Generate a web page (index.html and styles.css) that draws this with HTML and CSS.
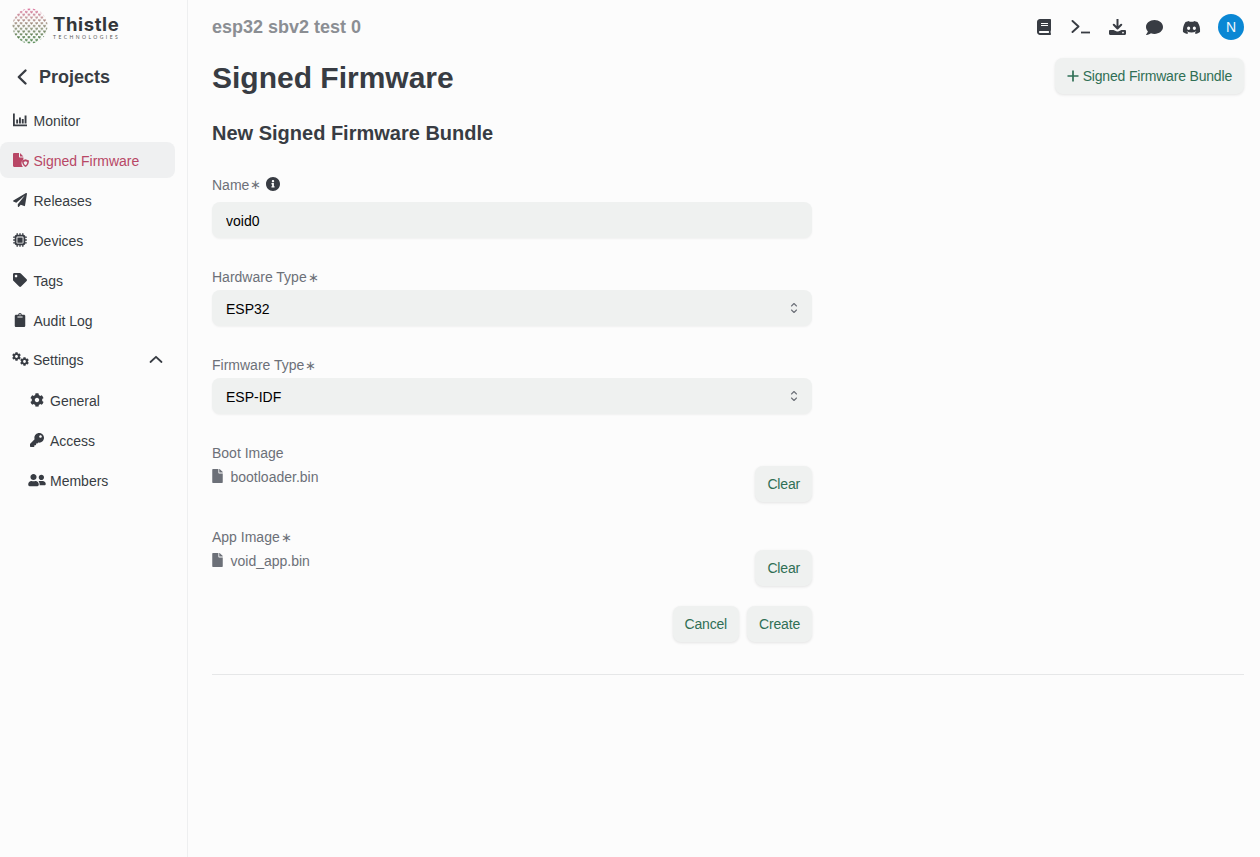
FILE: index.html
```html
<!DOCTYPE html>
<html lang="en">
<head>
  <meta charset="UTF-8">
  <meta name="viewport" content="width=device-width, initial-scale=1.0">
  <title>Signed Firmware</title>
  <link rel="stylesheet" href="styles.css">
</head>
<body>
  <svg class="defs" width="0" height="0">
    <symbol id="i-cog" viewBox="0 0 512 512"><path d="M487.4 315.7l-42.6-24.6c4.3-23.2 4.3-47 0-70.2l42.6-24.6c4.9-2.8 7.1-8.6 5.5-14-11.1-35.6-30-67.8-54.7-94.6-3.8-4.1-10-5.1-14.8-2.3L380.8 110c-17.9-15.4-38.5-27.3-60.8-35.1V25.8c0-5.6-3.9-10.5-9.4-11.7-36.7-8.2-74.3-7.8-109.2 0-5.5 1.2-9.4 6.1-9.4 11.7V75c-22.2 7.9-42.8 19.8-60.8 35.1L88.7 85.5c-4.9-2.8-11-1.9-14.8 2.3-24.7 26.7-43.6 58.9-54.7 94.6-1.7 5.4.6 11.2 5.5 14L67.3 221c-4.3 23.2-4.3 47 0 70.2l-42.6 24.6c-4.9 2.8-7.1 8.6-5.5 14 11.1 35.6 30 67.8 54.7 94.6 3.8 4.1 10 5.1 14.8 2.3l42.6-24.6c17.9 15.4 38.5 27.3 60.8 35.1v49.2c0 5.6 3.9 10.5 9.4 11.7 36.7 8.2 74.3 7.8 109.2 0 5.5-1.2 9.4-6.1 9.4-11.7v-49.2c22.2-7.9 42.8-19.8 60.8-35.1l42.6 24.6c4.9 2.8 11 1.9 14.8-2.3 24.7-26.7 43.6-58.9 54.7-94.6 1.5-5.5-.7-11.3-5.6-14.1zM256 336c-44.1 0-80-35.9-80-80s35.9-80 80-80 80 35.9 80 80-35.9 80-80 80z"/></symbol>
    <symbol id="i-file" viewBox="0 0 384 512"><path d="M224 136V0H24C10.7 0 0 10.7 0 24v464c0 13.3 10.7 24 24 24h336c13.3 0 24-10.7 24-24V160H248c-13.2 0-24-10.8-24-24zm160-14.1v6.1H256V0h6.1c6.4 0 12.5 2.5 17 7l97.9 98c4.5 4.5 7 10.6 7 16.9z"/></symbol>
    <symbol id="i-updown" viewBox="0 0 10 14"><path d="M2.500 5L5 2.500 7.500 5M2.500 9L5 11.500 7.500 9" fill="none" stroke="currentColor" stroke-width="1.100" stroke-linecap="round" stroke-linejoin="round"/></symbol>
  </svg>

  <div class="layout">
    <aside class="sidebar">
      <div class="logo">
        <svg class="logo-mark" viewBox="0 0 36 36" width="36" height="36">
          <defs>
            <linearGradient id="logoGrad" x1="0" y1="0" x2="0" y2="1">
              <stop offset="0" stop-color="#d9588c"/>
              <stop offset="0.28" stop-color="#b98a8a"/>
              <stop offset="0.55" stop-color="#7c8164"/>
              <stop offset="1" stop-color="#2f7430"/>
            </linearGradient>
            <pattern id="logoDots" width="5.200" height="5.600" patternUnits="userSpaceOnUse">
              <path d="M.2 .4l1.100 1.200 1.100-1.200M2.800 3.200l1.100 1.200 1.100-1.200" fill="none" stroke="#fff" stroke-width="1.300"/>
            </pattern>
            <mask id="logoMask"><circle cx="18" cy="18" r="17.500" fill="url(#logoDots)"/></mask>
          </defs>
          <rect width="36" height="36" fill="url(#logoGrad)" mask="url(#logoMask)"/>
        </svg>
        <div class="logo-text">
          <span class="logo-name">Thistle</span>
          <span class="logo-sub">TECHNOLOGIES</span>
        </div>
      </div>

      <a class="back" href="#">
        <svg width="12" height="18" viewBox="0 0 12 18"><path d="M9.500 2.500L2.800 9l6.700 6.500" fill="none" stroke="currentColor" stroke-width="2.400" stroke-linecap="round" stroke-linejoin="round"/></svg>
        Projects
      </a>

      <nav class="nav">
        <a class="nav-item" href="#">
          <svg class="nav-icon" width="14" height="14" viewBox="0 0 14 14"><path d="M.9 .5v11.800H14" fill="none" stroke="currentColor" stroke-width="1.800"/><path d="M3.200 6.500h1.900V10.500H3.200zM6 4.500h1.900V10.500H6zM8.800 6h1.900V10.500H8.800zM11.600 2.500h1.900V10.500h-1.900z" fill="currentColor"/></svg>
          Monitor
        </a>
        <a class="nav-item active" href="#">
          <svg class="nav-icon" width="16" height="14" viewBox="0 0 16 14"><path d="M0 1.200C0 .5.5 0 1.200 0H6v3.500c0 .6.4 1 1 1h3.400v2A4 4 0 0 0 8.500 10c0 1.500.5 3 1.500 4H1.200C.5 14 0 13.500 0 12.800zM7 0l3.400 3.500H7z" fill="currentColor"/><path d="M12.500 6.300l3.500 1.300c0 3.200-1.300 5.300-3.500 6.400-2.200-1.100-3.500-3.200-3.500-6.400z" fill="currentColor"/><path d="M12.500 8.300l1.800.7c-.1 1.600-.7 2.600-1.800 3.300-1.100-.7-1.700-1.700-1.800-3.300z" fill="#eff0f1"/></svg>
          Signed Firmware
        </a>
        <a class="nav-item" href="#">
          <svg class="nav-icon" width="14" height="14" viewBox="0 0 512 512"><path d="M476 3.200L12.500 270.600c-18.100 10.400-15.800 35.600 2.200 43.200L121 358.400l287.300-253.200c5.500-4.900 13.300 2.600 8.600 8.300L176 407v80.500c0 23.600 28.500 32.900 42.500 15.800L282 426l124.600 52.200c14.200 6 30.400-2.900 33-18.200l72-432C515 7.800 493.300-6.800 476 3.200z"/></svg>
          Releases
        </a>
        <a class="nav-item" href="#">
          <svg class="nav-icon" width="14" height="14" viewBox="0 0 512 512"><path d="M176 24c0-13.300-10.700-24-24-24s-24 10.700-24 24V64c-35.300 0-64 28.700-64 64H24c-13.300 0-24 10.700-24 24s10.700 24 24 24H64v56H24c-13.300 0-24 10.700-24 24s10.700 24 24 24H64v56H24c-13.300 0-24 10.700-24 24s10.700 24 24 24H64c0 35.300 28.700 64 64 64v40c0 13.300 10.700 24 24 24s24-10.700 24-24V448h56v40c0 13.300 10.700 24 24 24s24-10.700 24-24V448h56v40c0 13.300 10.700 24 24 24s24-10.700 24-24V448c35.300 0 64-28.700 64-64h40c13.300 0 24-10.700 24-24s-10.700-24-24-24H448V280h40c13.300 0 24-10.700 24-24s-10.700-24-24-24H448V176h40c13.300 0 24-10.700 24-24s-10.700-24-24-24H448c0-35.300-28.700-64-64-64V24c0-13.300-10.700-24-24-24s-24 10.700-24 24V64H280V24c0-13.300-10.700-24-24-24s-24 10.700-24 24V64H176V24zM160 128H352c17.700 0 32 14.300 32 32V352c0 17.700-14.300 32-32 32H160c-17.700 0-32-14.300-32-32V160c0-17.700 14.300-32 32-32zm192 32H160V352H352V160z"/></svg>
          Devices
        </a>
        <a class="nav-item" href="#">
          <svg class="nav-icon" width="14" height="14" viewBox="0 0 512 512"><path d="M0 252.118V48C0 21.490 21.490 0 48 0h204.118a48 48 0 0 1 33.941 14.059l211.882 211.882c18.745 18.745 18.745 49.137 0 67.882L293.823 497.941c-18.745 18.745-49.137 18.745-67.882 0L14.059 286.059A48 48 0 0 1 0 252.118zM112 64c-26.510 0-48 21.490-48 48s21.490 48 48 48 48-21.490 48-48-21.490-48-48-48z"/></svg>
          Tags
        </a>
        <a class="nav-item" href="#">
          <svg class="nav-icon" width="14" height="14" viewBox="0 0 384 512"><path d="M384 112v352c0 26.510-21.490 48-48 48H48c-26.510 0-48-21.490-48-48V112c0-26.510 21.490-48 48-48h80c0-35.290 28.710-64 64-64s64 28.710 64 64h80c26.510 0 48 21.490 48 48zM192 40c-13.255 0-24 10.745-24 24s10.745 24 24 24 24-10.745 24-24-10.745-24-24-24m96 114v-20a6 6 0 0 0-6-6H102a6 6 0 0 0-6 6v20a6 6 0 0 0 6 6h180a6 6 0 0 0 6-6z"/></svg>
          Audit Log
        </a>
        <a class="nav-item settings" href="#">
          <svg class="nav-icon cogs" width="17" height="14" viewBox="0 0 17 14"><use href="#i-cog" x="0" y="0" width="9" height="9"/><use href="#i-cog" x="8" y="5" width="9" height="9"/></svg>
          Settings
          <svg class="caret" width="14" height="9" viewBox="0 0 14 9"><path d="M1.500 7L7 1.800 12.500 7" fill="none" stroke="currentColor" stroke-width="1.800" stroke-linecap="round" stroke-linejoin="round"/></svg>
        </a>
        <a class="nav-item sub" href="#">
          <svg class="nav-icon" width="14" height="14"><use href="#i-cog"/></svg>
          General
        </a>
        <a class="nav-item sub" href="#">
          <svg class="nav-icon" width="14" height="14" viewBox="0 0 512 512"><path d="M512 176.001C512 273.203 433.202 352 336 352c-11.220 0-22.190-1.062-32.827-3.069l-24.012 27.014A23.999 23.999 0 0 1 261.223 384H224v40c0 13.255-10.745 24-24 24h-40v40c0 13.255-10.745 24-24 24H24c-13.255 0-24-10.745-24-24v-78.059c0-6.365 2.529-12.470 7.029-16.971l161.802-161.802C163.108 213.814 160 195.271 160 176 160 78.798 238.797.001 335.999 0 433.488-.001 512 78.511 512 176.001zM336 128c0 26.510 21.490 48 48 48s48-21.490 48-48-21.490-48-48-48-48 21.490-48 48z"/></svg>
          Access
        </a>
        <a class="nav-item sub members" href="#">
          <svg class="nav-icon" width="18" height="14" viewBox="0 0 640 512"><path d="M192 256c61.900 0 112-50.100 112-112S253.900 32 192 32 80 82.100 80 144s50.100 112 112 112zm76.800 32h-8.300c-20.800 10-43.900 16-68.500 16s-47.600-6-68.500-16h-8.300C51.600 288 0 339.600 0 403.200V432c0 26.500 21.500 48 48 48h288c26.500 0 48-21.500 48-48v-28.800c0-63.600-51.600-115.200-115.200-115.200zM480 256c53 0 96-43 96-96s-43-96-96-96-96 43-96 96 43 96 96 96zm48 32h-3.800c-13.900 4.800-28.600 8-44.200 8s-30.300-3.200-44.200-8H432c-20.400 0-39.200 5.900-55.700 15.400 24.400 26.300 39.700 61.200 39.700 99.800v38.400c0 2.200-.5 4.300-.6 6.400H592c26.500 0 48-21.500 48-48 0-61.900-50.100-112-112-112z"/></svg>
          Members
        </a>
      </nav>
    </aside>

    <main class="main">
      <header class="topbar">
        <div class="project-name">esp32 sbv2 test 0</div>
        <div class="top-icons">
          <svg width="14" height="16" viewBox="0 0 448 512"><path d="M448 360V24c0-13.300-10.700-24-24-24H96C43 0 0 43 0 96v320c0 53 43 96 96 96h328c13.300 0 24-10.700 24-24v-16c0-7.500-3.500-14.300-8.900-18.700-4.200-15.400-4.200-59.300 0-74.700 5.400-4.300 8.900-11.100 8.900-18.600zM128 134c0-3.300 2.700-6 6-6h212c3.300 0 6 2.700 6 6v20c0 3.300-2.700 6-6 6H134c-3.300 0-6-2.700-6-6v-20zm0 64c0-3.300 2.700-6 6-6h212c3.300 0 6 2.700 6 6v20c0 3.300-2.700 6-6 6H134c-3.300 0-6-2.700-6-6v-20zm253.400 250H96c-17.700 0-32-14.300-32-32 0-17.600 14.400-32 32-32h285.400c-1.900 17.100-1.900 46.900 0 64z"/></svg>
          <svg class="nudge" width="19" height="14" viewBox="0 0 19 14"><path d="M1.500 1l6 5.500-6 5.500" fill="none" stroke="currentColor" stroke-width="1.900" stroke-linecap="round" stroke-linejoin="round"/><path d="M10 12.500h9" fill="none" stroke="currentColor" stroke-width="1.800"/></svg>
          <svg width="17" height="16" viewBox="0 0 17 16"><path d="M8.500 0v9M4.800 5.800l3.700 3.700 3.700-3.700" fill="none" stroke="currentColor" stroke-width="2" stroke-linecap="round" stroke-linejoin="round"/><path d="M1.200 11H4.500l2.800 1.300c.7.400 1.700.4 2.400 0L12.500 11h3.300c.7 0 1.200.5 1.200 1.200v2.600c0 .7-.5 1.200-1.200 1.200H1.200C.5 16 0 15.500 0 14.800v-2.600C0 11.500.5 11 1.200 11z"/><circle cx="14" cy="13.600" r=".9" fill="#fcfcfc"/></svg>
          <svg class="nudge" width="17" height="15" viewBox="0 32 512 448"><path d="M256 32C114.600 32 0 125.100 0 240c0 49.600 21.400 95 57 130.700C44.500 421.100 2.700 466 2.200 466.500c-2.200 2.300-2.800 5.700-1.500 8.700S4.800 480 8 480c66.300 0 116-31.800 140.600-51.400 32.700 12.300 69 19.400 107.400 19.400 141.400 0 256-93.100 256-208S397.400 32 256 32z"/></svg>
          <svg width="19" height="15" viewBox="0 0 640 512"><path d="M524.531,69.836a1.500,1.500,0,0,0-.764-.7A485.065,485.065,0,0,0,404.081,32.030a1.816,1.816,0,0,0-1.923.910,337.461,337.461,0,0,0-14.900,30.600,447.848,447.848,0,0,0-134.426,0,309.541,309.541,0,0,0-15.135-30.600,1.890,1.890,0,0,0-1.924-.910A483.689,483.689,0,0,0,116.085,69.137a1.712,1.712,0,0,0-.788.676C39.068,183.651,18.186,294.690,28.430,404.354a2.016,2.016,0,0,0,.765,1.375A487.666,487.666,0,0,0,176.020,479.918a1.900,1.900,0,0,0,2.063-.676A348.200,348.200,0,0,0,208.120,430.400a1.860,1.860,0,0,0-1.019-2.588,321.173,321.173,0,0,1-45.868-21.853,1.885,1.885,0,0,1-.185-3.126c3.082-2.309,6.166-4.711,9.109-7.137a1.819,1.819,0,0,1,1.900-.256c96.229,43.917,200.410,43.917,295.500,0a1.812,1.812,0,0,1,1.924.233c2.944,2.426,6.027,4.851,9.132,7.160a1.884,1.884,0,0,1-.162,3.126,301.407,301.407,0,0,1-45.890,21.830,1.875,1.875,0,0,0-1,2.611,391.055,391.055,0,0,0,30.014,48.815,1.864,1.864,0,0,0,2.063.7A486.048,486.048,0,0,0,610.700,405.729a1.882,1.882,0,0,0,.765-1.352C623.729,277.594,590.933,167.465,524.531,69.836ZM222.491,337.580c-28.972,0-52.844-26.587-52.844-59.239S193.056,219.100,222.491,219.100c29.665,0,53.306,26.820,52.843,59.239C275.334,310.993,251.924,337.580,222.491,337.580Zm195.380,0c-28.971,0-52.843-26.587-52.843-59.239S388.437,219.100,417.871,219.100c29.667,0,53.307,26.820,52.844,59.239C470.715,310.993,447.538,337.580,417.871,337.580Z"/></svg>
          <div class="avatar">N</div>
        </div>
      </header>

      <div class="page-head">
        <h1>Signed Firmware</h1>
        <button class="btn btn-add" type="button">
          <svg width="12" height="12" viewBox="0 0 12 12"><path d="M6 .5v11M.5 6h11" fill="none" stroke="currentColor" stroke-width="1.700"/></svg>
          Signed Firmware Bundle
        </button>
      </div>

      <form class="bundle-form">
        <h2>New Signed Firmware Bundle</h2>

        <div class="field field-name">
          <label for="name">Name<span class="req">∗</span>
            <svg class="info" width="14" height="14" viewBox="8 8 496 496"><path d="M256 8C119 8 8 119.100 8 256c0 137 111 248 248 248s248-111 248-248C504 119.100 393 8 256 8zm0 110c23.200 0 42 18.800 42 42s-18.800 42-42 42-42-18.800-42-42 18.800-42 42-42zm56 254c0 6.600-5.400 12-12 12h-88c-6.600 0-12-5.400-12-12v-24c0-6.600 5.400-12 12-12h12v-64h-12c-6.600 0-12-5.400-12-12v-24c0-6.600 5.400-12 12-12h64c6.600 0 12 5.400 12 12v100h12c6.600 0 12 5.400 12 12v24z"/></svg>
          </label>
          <input id="name" class="control" type="text" value="void0">
        </div>

        <div class="field">
          <label for="hw">Hardware Type<span class="req">∗</span></label>
          <div class="select-wrap">
            <select id="hw" class="control"><option>ESP32</option></select>
            <svg class="updown" width="10" height="14"><use href="#i-updown"/></svg>
          </div>
        </div>

        <div class="field">
          <label for="fw">Firmware Type<span class="req">∗</span></label>
          <div class="select-wrap">
            <select id="fw" class="control"><option>ESP-IDF</option></select>
            <svg class="updown" width="10" height="14"><use href="#i-updown"/></svg>
          </div>
        </div>

        <div class="file-field">
          <div>
            <div class="file-label">Boot Image</div>
            <div class="file-name"><svg width="11" height="14"><use href="#i-file"/></svg>bootloader.bin</div>
          </div>
          <button class="btn" type="button">Clear</button>
        </div>

        <div class="file-field">
          <div>
            <div class="file-label">App Image<span class="req">∗</span></div>
            <div class="file-name"><svg width="11" height="14"><use href="#i-file"/></svg>void_app.bin</div>
          </div>
          <button class="btn" type="button">Clear</button>
        </div>

        <div class="actions">
          <button class="btn" type="button">Cancel</button>
          <button class="btn" type="submit">Create</button>
        </div>
      </form>

      <hr class="divider">
    </main>
  </div>
</body>
</html>
```

FILE: styles.css
```css
* {
  box-sizing: border-box;
}
html, body {
  height: 100%;
}
body {
  margin: 0;
  font-family: "Liberation Sans", Arial, sans-serif;
  font-size: 14px;
  line-height: 20px;
  color: #383c43;
  background: #fcfcfc;
  overflow: hidden;
}
a {
  color: inherit;
  text-decoration: none;
}
svg {
  fill: currentColor;
  flex: none;
}
.defs {
  position: absolute;
}
.layout {
  display: flex;
  height: 100%;
}

/* sidebar */
.sidebar {
  width: 188px;
  flex: none;
  border-right: 1px solid #eeeff0;
}
.logo {
  height: 52px;
  padding: 8px 0 0 12px;
  display: flex;
  gap: 5px;
}
.logo-text {
  display: flex;
  flex-direction: column;
  padding-top: 6px;
}
.logo-name {
  font-family: Inter, sans-serif;
  font-weight: 700;
  font-size: 18.500px;
  line-height: 20px;
  letter-spacing: 0.6px;
  color: #33363a;
}
.logo-sub {
  font-family: Lato, sans-serif;
  font-size: 5px;
  line-height: 7px;
  letter-spacing: 2.450px;
  color: #555;
}
.back {
  display: flex;
  align-items: center;
  gap: 11px;
  height: 32px;
  margin: 9px 0 0 16px;
  font-size: 18px;
  font-weight: 700;
}
.nav {
  display: flex;
  flex-direction: column;
  gap: 4px;
  width: 175px;
  margin-top: 9px;
}
.nav-item {
  display: flex;
  align-items: center;
  gap: 6.500px;
  height: 36px;
  padding: 2px 0 0 13px;
  border-radius: 8px;
}
.nav-item .nav-icon {
  margin-top: -2px;
}
.nav-item.active {
  color: #b84766;
  background: #eff0f1;
  gap: 4.500px;
}
.nav-item.settings {
  position: relative;
  gap: 4px;
  padding-left: 12px;
  margin-top: -1px;
  margin-bottom: 1px;
}
.caret {
  position: absolute;
  right: 12px;
  top: 14px;
}
.nav-item.sub {
  padding-left: 30px;
  gap: 6px;
}
.nav-item.members {
  padding-left: 28px;
  gap: 4px;
}

/* main */
.main {
  flex: 1;
  min-width: 0;
  padding: 0 16px 0 24px;
}
.topbar {
  display: flex;
  align-items: center;
  justify-content: space-between;
  height: 54px;
}
.project-name {
  font-size: 18px;
  font-weight: 700;
  color: #8b8e93;
}
.top-icons {
  display: flex;
  align-items: center;
  gap: 19px;
}
.top-icons .nudge {
  margin-left: 1px;
}
.avatar {
  width: 26px;
  height: 26px;
  margin-left: -2px;
  border-radius: 50%;
  background: #0a87d4;
  color: #f4f8fb;
  font-size: 14px;
  line-height: 26px;
  text-align: center;
}
.page-head {
  display: flex;
  justify-content: space-between;
  align-items: flex-start;
  height: 60px;
  padding-top: 4px;
}
h1 {
  margin: 0;
  font-size: 30px;
  line-height: 40px;
  font-weight: 700;
}
h2 {
  margin: 0 0 28px;
  font-size: 20px;
  line-height: 28px;
  font-weight: 700;
}
.bundle-form {
  width: 600px;
  padding-top: 5px;
}
.btn {
  display: inline-flex;
  align-items: center;
  gap: 4px;
  height: 36px;
  padding: 0 12px;
  border: none;
  border-radius: 8px;
  background: #eff1f0;
  box-shadow: 0 1px 3px rgba(0, 0, 0, 0.1);
  color: #2f6f55;
  font: inherit;
  letter-spacing: -0.18px;
}
.field {
  margin-bottom: 29px;
}
.field label {
  display: block;
  height: 20px;
  margin-bottom: 3px;
  color: #6c7078;
}
.field-name label {
  display: flex;
  align-items: center;
  margin-bottom: 7px;
}
.info {
  margin-left: 5px;
  margin-top: -2px;
  color: #383c43;
}
.req {
  margin-left: 1px;
  font-size: 13px;
  color: #6c7078;
}
.control {
  display: block;
  width: 100%;
  height: 36px;
  padding: 2px 14px 0;
  border: none;
  border-radius: 8px;
  background: #eff1f0;
  box-shadow: 0 1px 2px rgba(0, 0, 0, 0.05);
  color: #000;
  font: inherit;
  appearance: none;
}
.select-wrap {
  position: relative;
}
.updown {
  position: absolute;
  right: 13px;
  top: 11px;
  color: #6c7078;
}
.file-field {
  display: flex;
  justify-content: space-between;
  align-items: flex-end;
  margin-bottom: 25px;
  color: #6c7078;
}
.file-label {
  height: 20px;
  margin-bottom: 4px;
}
.file-name {
  display: flex;
  align-items: center;
  gap: 7.500px;
  height: 20px;
  margin-bottom: 15px;
}
.file-name svg {
  margin-top: -3px;
}
.actions {
  display: flex;
  justify-content: flex-end;
  gap: 8px;
  margin-top: -5px;
}
.divider {
  margin: 32px 0 0;
  border: none;
  border-top: 1px solid #e6e7e8;
}
```
